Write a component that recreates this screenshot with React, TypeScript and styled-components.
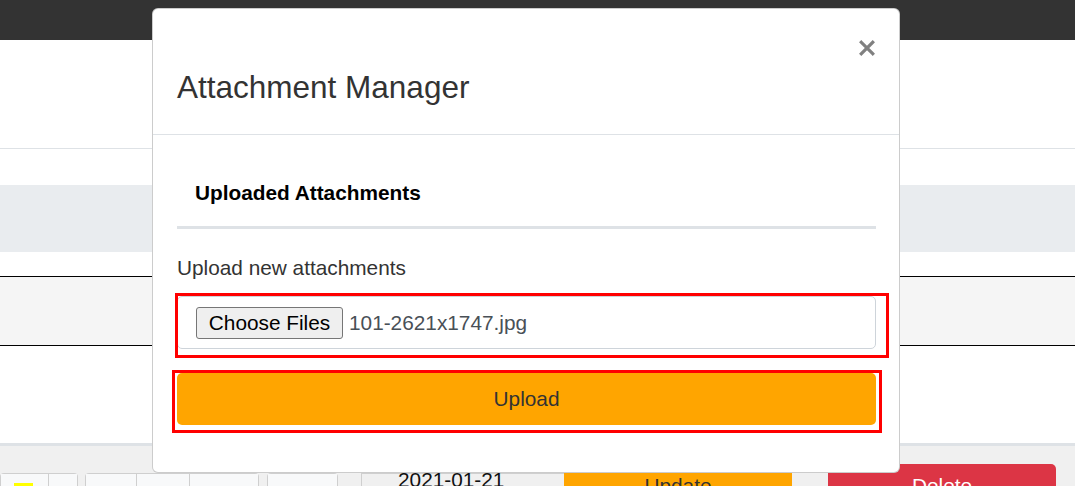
import React from "react";
import styled, { createGlobalStyle } from "styled-components";

const GlobalStyle = createGlobalStyle`
  html, body { margin: 0; padding: 0; background: #fff; overflow: hidden; }
  body { font-family: "Liberation Sans", Arial, Helvetica, sans-serif; }
  *, *::before, *::after { box-sizing: border-box; }
`;

const Page = styled.div`
  position: relative;
  width: 1075px;
  height: 486px;
  overflow: hidden;
  display: flex;
  flex-direction: column;
  background: #fff;
`;

const Navbar = styled.div`
  height: 40px;
  flex-shrink: 0;
  background: #333333;
`;

const Section = styled.div<{ $h: number; $bg?: string; $border?: string }>`
  height: ${(p) => p.$h}px;
  flex-shrink: 0;
  background: ${(p) => p.$bg ?? "#fff"};
  border-bottom: ${(p) => p.$border ?? "none"};
`;

const Footer = styled.div`
  flex: 1;
  display: flex;
  align-items: flex-start;
  border-top: 3px solid #dee2e6;
  background: #f0f0f0;
  padding-top: 18px;
`;

const ToolGroup = styled.div<{ $gap?: number }>`
  display: flex;
  margin-top: 9px;
  margin-left: ${(p) => p.$gap ?? 0}px;
  border-radius: 4px 4px 0 0;
  overflow: hidden;
`;

const ToolBox = styled.div<{ $w: number }>`
  position: relative;
  width: ${(p) => p.$w}px;
  height: 30px;
  background: #f8f9fa;
  border: 1px solid #cfcfcf;
  padding: 9px 0 0 13px;
  & + & {
    margin-left: -1px;
  }
`;

const Marker = styled.span`
  display: block;
  width: 19px;
  height: 10px;
  background: #ffff00;
`;

const DateBox = styled.div`
  margin-top: 9px;
  margin-left: 23px;
  width: 203px;
  height: 30px;
  border-top: 1px solid #cfcfcf;
  border-left: 1px solid #cfcfcf;
  background: #f0f0f0;
  padding-left: 36px;
  font-size: 20.8px;
  line-height: 12px;
  color: #111;
`;

const ActionButton = styled.div<{ $bg: string; $color: string; $w: number; $top: number; $gap?: number; $pad?: number; $radius?: number }>`
  margin-top: ${(p) => p.$top}px;
  margin-left: ${(p) => p.$gap ?? 0}px;
  width: ${(p) => p.$w}px;
  height: 40px;
  background: ${(p) => p.$bg};
  color: ${(p) => p.$color};
  border-radius: ${(p) => p.$radius ?? 0}px;
  padding-top: ${(p) => p.$pad ?? 0}px;
  text-align: center;
  font-size: 20.8px;
  line-height: 26px;
`;

const Modal = styled.div`
  position: absolute;
  left: 152px;
  top: 8px;
  width: 748px;
  height: 465px;
  background: #fff;
  border: 1px solid rgba(0, 0, 0, 0.2);
  border-radius: 6px;
  display: flex;
  flex-direction: column;
  color: #333;
`;

const ModalHeader = styled.div`
  height: 126px;
  flex-shrink: 0;
  border-bottom: 1px solid #dee2e6;
  padding: 0 24px 0 24px;
  display: flex;
  justify-content: space-between;
  align-items: flex-start;
`;

const Title = styled.h4`
  margin: 59px 0 0;
  font-size: 31.5px;
  font-weight: 400;
  line-height: 38px;
  color: #333;
`;

const CloseButton = styled.button`
  margin-top: 31px;
  padding: 0;
  border: 0;
  background: none;
  width: 16px;
  height: 16px;
  display: block;
  cursor: pointer;
  svg {
    display: block;
  }
`;

const ModalBody = styled.div`
  padding: 0 23px 0 24px;
  display: flex;
  flex-direction: column;
`;

const TabBar = styled.div`
  display: flex;
  padding-top: 42px;
  border-bottom: 3px solid #dee2e6;
`;

const Tab = styled.div`
  padding: 0 18px 18px;
  font-size: 20.8px;
  font-weight: 700;
  line-height: 31px;
  color: #000;
`;

const Label = styled.label`
  display: block;
  margin-top: 23px;
  font-size: 20.8px;
  line-height: 31px;
  color: #333;
`;

const FieldWrap = styled.div<{ $top: number }>`
  position: relative;
  margin-top: ${(p) => p.$top}px;
`;

const Highlight = styled.div<{ $inset: string }>`
  position: absolute;
  inset: ${(p) => p.$inset};
  border: 3px solid #ff0000;
  pointer-events: none;
`;

const FileField = styled.div`
  height: 53px;
  border: 1px solid #ced4da;
  border-radius: 5px;
  display: flex;
  align-items: center;
  padding-left: 18px;
  background: #fff;
`;

const ChooseButton = styled.button`
  width: 147px;
  height: 32px;
  padding: 0;
  background: #efefef;
  border: 1px solid #767676;
  border-radius: 3px;
  font-family: inherit;
  font-size: 20.8px;
  color: #000;
`;

const FileName = styled.span`
  margin-left: 6px;
  font-size: 20.8px;
  color: #495057;
`;

const UploadButton = styled.button`
  display: block;
  width: 100%;
  height: 52px;
  border: 0;
  border-radius: 5px;
  background: #ffa500;
  color: #333;
  font-family: inherit;
  font-size: 20.8px;
  padding: 0;
`;

export default function App() {
  return (
    <>
      <GlobalStyle />
      <Page>
        <Navbar />
        <Section $h={109} $border="1px solid #dee2e6" />
        <Section $h={36} />
        <Section $h={67} $bg="#e9ecef" />
        <Section $h={25} $border="1px solid #000" />
        <Section $h={69} $bg="#f5f5f5" $border="1px solid #000" />
        <Section $h={97} />
        <Footer>
          <ToolGroup>
            <ToolBox $w={49}>
              <Marker />
            </ToolBox>
            <ToolBox $w={30} />
          </ToolGroup>
          <ToolGroup $gap={7}>
            <ToolBox $w={52} />
            <ToolBox $w={54} />
            <ToolBox $w={70} />
          </ToolGroup>
          <ToolGroup $gap={8}>
            <ToolBox $w={71} />
          </ToolGroup>
          <DateBox>2021-01-21</DateBox>
          <ActionButton $bg="#ffa500" $color="#333" $w={228} $top={9}>
            Update
          </ActionButton>
          <ActionButton $bg="#dc3545" $color="#fff" $w={228} $top={0} $gap={36} $pad={9} $radius={5}>
            Delete
          </ActionButton>
        </Footer>

        <Modal role="dialog" aria-label="Attachment Manager">
          <ModalHeader>
            <Title>Attachment Manager</Title>
            <CloseButton aria-label="Close">
              <svg width="16" height="16" viewBox="0 0 16 16">
                <path
                  d="M2.3 2.3 L13.7 13.7 M13.7 2.3 L2.3 13.7"
                  stroke="#808080"
                  strokeWidth="3.2"
                  strokeLinecap="square"
                  fill="none"
                />
              </svg>
            </CloseButton>
          </ModalHeader>
          <ModalBody>
            <TabBar>
              <Tab>Uploaded Attachments</Tab>
            </TabBar>
            <Label>Upload new attachments</Label>
            <FieldWrap $top={13}>
              <FileField>
                <ChooseButton type="button">Choose Files</ChooseButton>
                <FileName>101-2621x1747.jpg</FileName>
              </FileField>
              <Highlight $inset="-3px -13px -9px -2px" />
            </FieldWrap>
            <FieldWrap $top={24}>
              <UploadButton type="button">Upload</UploadButton>
              <Highlight $inset="-3px -6px -8px -5px" />
            </FieldWrap>
          </ModalBody>
        </Modal>
      </Page>
    </>
  );
}
